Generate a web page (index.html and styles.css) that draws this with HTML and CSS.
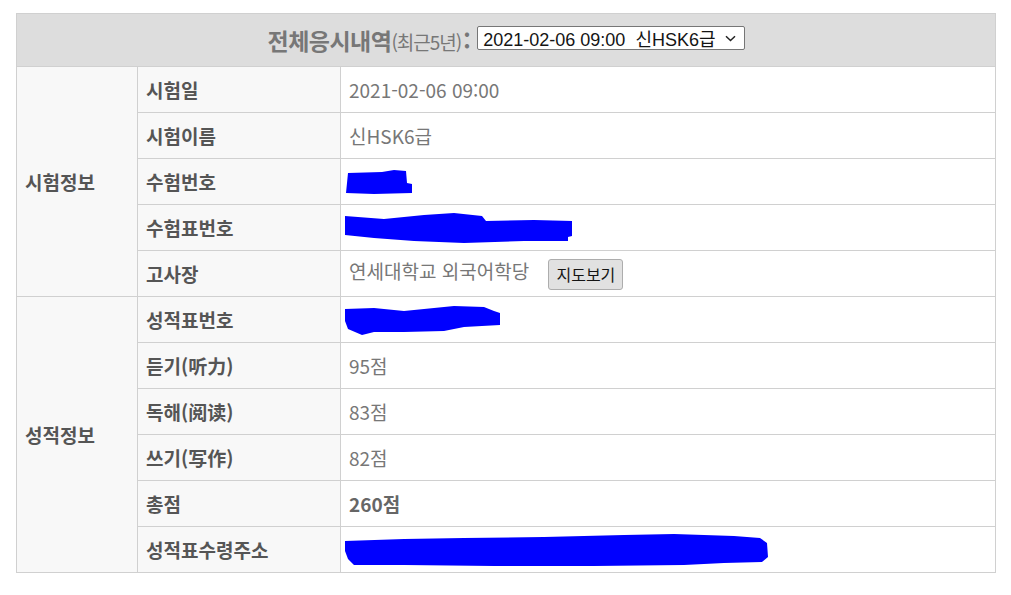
FILE: index.html
```html
<!DOCTYPE html>
<html lang="ko">

<head>
    <meta charset="UTF-8" />
    <meta name="viewport" content="width=device-width, initial-scale=1.0" />
    <title>응시내역</title>
    <link rel="stylesheet" href="styles.css">
</head>

<body class="page">
    <div class="wrap">
        <table class="result-tbl">
            <colgroup>
                <col class="col-group" />
                <col class="col-label" />
                <col />
            </colgroup>
            <thead>
                <tr>
                    <th colspan="3" class="head-cell">
                        <span class="head-title">전체응시내역</span><span class="head-sub">(최근5년)</span><span class="head-colon">:</span>
                        <span class="exam-select">2021-02-06 09:00&nbsp;&nbsp;신HSK6급
                            <svg class="sel-arrow" width="11" height="7" viewBox="0 0 11 7"><path d="M1 1.2 L5.5 5.5 L10 1.2" fill="none" stroke="#222" stroke-width="1.5" /></svg>
                        </span>
                    </th>
                </tr>
            </thead>
            <tbody>
                <tr>
                    <td rowspan="5" class="grp-cell">시험정보</td>
                    <td class="lbl-cell">시험일</td>
                    <td class="val-cell">2021-02-06 09:00</td>
                </tr>
                <tr>
                    <td class="lbl-cell">시험이름</td>
                    <td class="val-cell">신HSK6급</td>
                </tr>
                <tr>
                    <td class="lbl-cell">수험번호</td>
                    <td class="val-cell">
                        <svg class="scribble" width="72" height="26" viewBox="0 0 72 26"><path d="M4 4 L38 3 L50 1 L62 2 L63 14 L68 15 L68 24 L30 25 L2 24 L3 14 Z" fill="#0000ff" /></svg>
                    </td>
                </tr>
                <tr>
                    <td class="lbl-cell">수험표번호</td>
                    <td class="val-cell">
                        <svg class="scribble" width="232" height="32" viewBox="0 0 232 32"><path d="M1 4 L40 7 L80 3 L110 1 L138 4 L142 9 L190 8 L228 9 L228 24 L224 25 L224 29 L180 29 L120 31 L70 29 L30 26 L1 23 Z" fill="#0000ff" /></svg>
                    </td>
                </tr>
                <tr>
                    <td class="lbl-cell">고사장</td>
                    <td class="val-cell">연세대학교 외국어학당 <button class="map-btn">지도보기</button></td>
                </tr>
                <tr>
                    <td rowspan="6" class="grp-cell">성적정보</td>
                    <td class="lbl-cell">성적표번호</td>
                    <td class="val-cell">
                        <svg class="scribble" width="160" height="30" viewBox="0 0 160 30"><path d="M1 4 L30 3 L60 6 L90 3 L110 1 L140 2 L150 6 L156 8 L156 20 L120 22 L100 26 L60 27 L30 27 L18 30 L4 24 L1 16 Z" fill="#0000ff" /></svg>
                    </td>
                </tr>
                <tr>
                    <td class="lbl-cell">듣기(听力)</td>
                    <td class="val-cell">95점</td>
                </tr>
                <tr>
                    <td class="lbl-cell">독해(阅读)</td>
                    <td class="val-cell">83점</td>
                </tr>
                <tr>
                    <td class="lbl-cell">쓰기(写作)</td>
                    <td class="val-cell">82점</td>
                </tr>
                <tr>
                    <td class="lbl-cell">총점</td>
                    <td class="val-cell val-strong">260점</td>
                </tr>
                <tr>
                    <td class="lbl-cell">성적표수령주소</td>
                    <td class="val-cell">
                        <svg class="scribble" width="426" height="34" viewBox="0 0 426 34"><path d="M1 8 L60 6 L120 5 L200 4 L280 2 L330 1 L390 3 L416 5 L423 10 L424 24 L418 29 L380 30 L340 32 L250 33 L150 33 L60 32 L10 32 L4 26 L1 18 Z" fill="#0000ff" /></svg>
                    </td>
                </tr>
            </tbody>
        </table>
    </div>
</body>

</html>
```

FILE: styles.css
```css
.page {
    margin: 0;
    background-color: rgb(255, 255, 255);
    font-family: "Noto Sans CJK KR", "Noto Sans", sans-serif;
}

.wrap {
    padding: 13px 15px 0 16px;
}

.result-tbl {
    width: 980px;
    border-collapse: collapse;
    table-layout: fixed;
}

.col-group {
    width: 121px;
}

.col-label {
    width: 203px;
}

.result-tbl td,
.result-tbl th {
    border: 1px solid rgb(208, 208, 208);
    padding: 0 8px;
}

.head-cell {
    height: 52px;
    background-color: rgb(221, 221, 221);
    text-align: center;
    color: rgb(119, 119, 119);
    font-weight: 400;
    white-space: nowrap;
}

.head-title {
    font-size: 23px;
    font-weight: 700;
    letter-spacing: -0.5px;
}

.head-sub {
    font-size: 19px;
    letter-spacing: -1px;
}

.head-colon {
    font-size: 23px;
    font-weight: 700;
    margin-left: 2px;
}

.exam-select {
    display: inline-flex;
    align-items: center;
    gap: 9px;
    margin-left: 2px;
    padding: 0 8px 0 5px;
    height: 22px;
    border: 1px solid rgb(118, 118, 118);
    border-radius: 2px;
    background-color: rgb(255, 255, 255);
    color: rgb(20, 20, 20);
    font-family: "Liberation Sans", "Noto Sans CJK KR", sans-serif;
    font-size: 18px;
    vertical-align: 4px;
}

.sel-arrow {
    display: block;
}

.grp-cell {
    height: 45px;
    background-color: rgb(248, 248, 248);
    color: rgb(85, 85, 85);
    font-size: 19px;
    font-weight: 700;
}

.lbl-cell {
    height: 45px;
    background-color: rgb(248, 248, 248);
    color: rgb(85, 85, 85);
    font-size: 19px;
    font-weight: 700;
}

.val-cell {
    height: 45px;
    color: rgb(119, 119, 119);
    font-size: 19px;
}

.val-strong {
    color: rgb(102, 102, 102);
    font-weight: 700;
}

.scribble {
    display: block;
    margin-left: -5px;
}

.map-btn {
    margin-left: 14px;
    padding: 3px 7px;
    border: 1px solid rgb(173, 173, 173);
    border-radius: 3px;
    background-color: rgb(225, 225, 225);
    color: rgb(20, 20, 20);
    font-family: "Noto Sans CJK KR", sans-serif;
    font-size: 16px;
    line-height: 23px;
    vertical-align: middle;
}
```
